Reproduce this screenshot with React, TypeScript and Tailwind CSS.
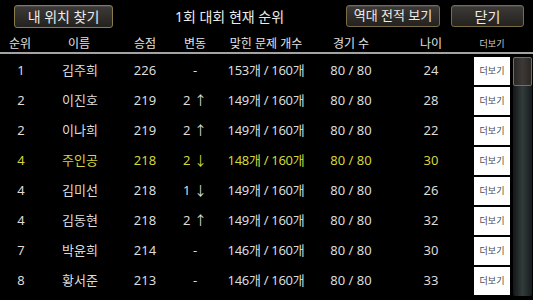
import React from 'react'

type Row = {
  rank: number
  name: string
  score: number
  change: string
  correct: string
  games: string
  age: number
  me?: boolean
}

const rows: Row[] = [
  { rank: 1, name: '김주희', score: 226, change: '-', correct: '153개 / 160개', games: '80 / 80', age: 24 },
  { rank: 2, name: '이진호', score: 219, change: '2 ↑', correct: '149개 / 160개', games: '80 / 80', age: 28 },
  { rank: 2, name: '이나희', score: 219, change: '2 ↑', correct: '149개 / 160개', games: '80 / 80', age: 22 },
  { rank: 4, name: '주인공', score: 218, change: '2 ↓', correct: '148개 / 160개', games: '80 / 80', age: 30, me: true },
  { rank: 4, name: '김미선', score: 218, change: '1 ↓', correct: '149개 / 160개', games: '80 / 80', age: 26 },
  { rank: 4, name: '김동현', score: 218, change: '2 ↑', correct: '149개 / 160개', games: '80 / 80', age: 32 },
  { rank: 7, name: '박윤희', score: 214, change: '-', correct: '146개 / 160개', games: '80 / 80', age: 30 },
  { rank: 8, name: '황서준', score: 213, change: '-', correct: '146개 / 160개', games: '80 / 80', age: 33 },
]

const font = { fontFamily: '"Noto Sans", "Noto Sans CJK KR", sans-serif' }

function GameButton({ label, className }: { label: string; className: string }) {
  return (
    <button
      className={`flex items-center justify-center rounded-[3px] border border-[#7a6d45] bg-gradient-to-b from-[#3d3a37] to-[#24221f] text-[#ececec] shadow-[inset_0_1px_0_rgba(255,255,255,0.08)] ${className}`}
    >
      {label}
    </button>
  )
}

export default function App() {
  return (
    <div className="h-[300px] w-[533px] overflow-hidden bg-black" style={font}>
      {/* top bar */}
      <div className="flex h-[35px] items-start pt-[5px]">
        <GameButton label="내 위치 찾기" className="ml-[14px] h-[23px] w-[99px] border-[#8a7b4c] text-[14px]" />
        <div className="flex flex-1 justify-center pt-[1px] text-[14px] text-[#ececec]">1회 대회 현재 순위</div>
        <div className="mr-[9px] flex gap-[11px]">
          <GameButton label="역대 전적 보기" className="h-[22px] w-[94px] text-[13px]" />
          <GameButton label="닫기" className="h-[22px] w-[73px] text-[14px]" />
        </div>
      </div>

      {/* header */}
      <div className="flex h-[17px] items-center text-[12px] text-[#e2e2e2]">
        <div className="w-[40px] text-center">순위</div>
        <div className="w-[78px] text-center">이름</div>
        <div className="w-[54px] text-center">승점</div>
        <div className="w-[46px] text-center">변동</div>
        <div className="w-[96px] text-center">맞힌 문제 개수</div>
        <div className="w-[74px] text-center">경기 수</div>
        <div className="w-[86px] text-center">나이</div>
        <div className="w-[36px] text-center text-[9px] text-[#cfcfcf]">더보기</div>
      </div>
      <div className="h-[2px] w-full bg-[#a3a3a3]" />

      {/* list + scrollbar */}
      <div className="mt-[3px] flex">
        <div className="flex flex-col gap-[2px]">
          {rows.map((r, i) => (
            <div
              key={i}
              className={`flex h-[28px] items-center text-[13px] ${r.me ? 'text-[#d4d63a]' : 'text-[#dcdcdc]'}`}
            >
              <div className="w-[42px] text-center">{r.rank}</div>
              <div className="w-[76px] text-center">{r.name}</div>
              <div className="w-[54px] text-center">{r.score}</div>
              <div className="w-[46px] text-center">{r.change}</div>
              <div className="w-[96px] text-center tracking-[-0.3px]">{r.correct}</div>
              <div className="w-[74px] text-center">{r.games}</div>
              <div className="w-[86px] text-center">{r.age}</div>
              <div className="flex h-[28px] w-[36px] items-center justify-center bg-white text-[9px] text-[#4a4a4a]">
                더보기
              </div>
            </div>
          ))}
        </div>
        <div className="ml-[3px] h-[239px] w-[19px] rounded-[2px] bg-gradient-to-r from-[#131719] via-[#323b3b] to-[#171c1e]">
          <div className="h-[29px] w-full rounded-[2px] border border-[#7d7048] bg-gradient-to-r from-[#2a2725] via-[#3d3936] to-[#2a2725]" />
        </div>
      </div>
    </div>
  )
}
